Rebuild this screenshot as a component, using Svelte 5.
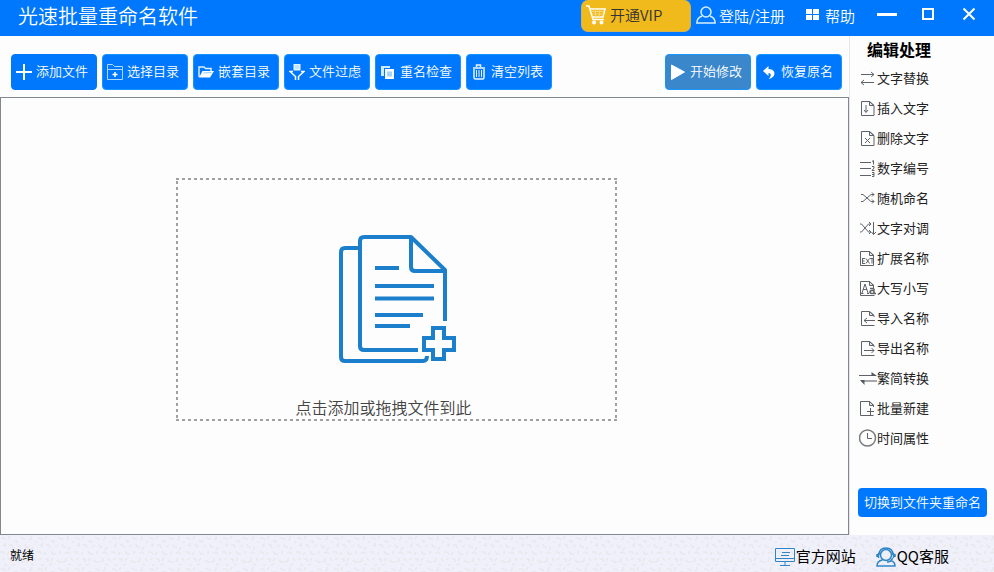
<script>
  const fileTools = [
    { icon: 'plus', label: '添加文件', plain: true },
    { icon: 'folder', label: '选择目录' },
    { icon: 'open', label: '嵌套目录' },
    { icon: 'filter', label: '文件过虑' },
    { icon: 'copy', label: '重名检查' },
    { icon: 'trash', label: '清空列表' },
  ];
  const runTools = [
    { icon: 'play', label: '开始修改', muted: true },
    { icon: 'undo', label: '恢复原名' },
  ];
  const edits = [
    { icon: 'swap', label: '文字替换' },
    { icon: 'insert', label: '插入文字' },
    { icon: 'delete', label: '删除文字' },
    { icon: 'number', label: '数字编号' },
    { icon: 'shuffle', label: '随机命名' },
    { icon: 'exchange', label: '文字对调' },
    { icon: 'ext', label: '扩展名称' },
    { icon: 'case', label: '大写小写' },
    { icon: 'import', label: '导入名称' },
    { icon: 'export', label: '导出名称' },
    { icon: 'convert', label: '繁简转换' },
    { icon: 'create', label: '批量新建' },
    { icon: 'clock', label: '时间属性' },
  ];
</script>

{#snippet toolIcon(name)}
  <svg class="tool-icon" viewBox="0 0 16 16" aria-hidden="true">
    {#if name === 'plus'}
      <path d="M8 0v16M0 8h16" fill="none" stroke="#fff" stroke-width="2" />
    {:else if name === 'folder'}
      <g fill="none" stroke="#a9dcff">
        <path d="M.5 15.500V.5h5l2 2h8v13zM.5 5.500h15" />
        <path d="M8 8v5M5.500 10.500h5" stroke="#fff" stroke-width="1.500" />
      </g>
    {:else if name === 'open'}
      <path d="M1 13V3h5l1.500 1.500H13V7" fill="none" stroke="#d8efff" stroke-width="1.500" />
      <path d="M1 13.500 4.500 7H16l-4 6.500z" fill="#fff" />
      <path d="m5.500 9 8-.5" stroke="#8cc9ff" />
    {:else if name === 'filter'}
      <path d="M4.500 0h7v6.500h-7z" fill="#e5f5ff" />
      <path d="M6 2h4M6 4h4" stroke="#9bd1ff" />
      <path d="M4 7.500H1l5.500 5V16M12 7.500h3l-5.500 5V16" fill="none" stroke="#fff" stroke-width="1.500" />
    {:else if name === 'copy'}
      <path d="M1 2h9v2H4v8H1z" fill="#cfebff" />
      <path d="M5 5h9v10H5z" fill="#fff" />
      <path d="M7 7.500h5v5H7z" fill="#a4d3fb" />
    {:else if name === 'trash'}
      <g fill="none" stroke="#e9f6ff" stroke-width="1.500">
        <path d="M5.500 3V1h4v2M2 4h12M3 5v8.500q0 1.500 1.500 1.500h7q1.500 0 1.500-1.500V5" />
        <path d="M5.500 6v7M8 6v7M10.500 6v7" stroke-width="1" />
      </g>
    {:else if name === 'play'}
      <path d="M1.500 1 14.500 8l-13 7.500z" fill="#fff" stroke="#fff" stroke-linejoin="round" />
    {:else}
      <path d="M2 7 7.500 2v3c5 0 7 3 5.500 6.500-1 2-3 3-5.500 3.500 2.500-2 3.500-5.500 0-6v3z" fill="#fff" />
    {/if}
  </svg>
{/snippet}

{#snippet editIcon(name)}
  <svg class="edit-icon" viewBox="0 0 18 18" aria-hidden="true">
    <g fill="none" stroke="#5f6369">
      {#if ['insert', 'delete', 'ext', 'case', 'import', 'export', 'create'].includes(name)}
        <path d="M10.500 2.500v4h4.500z" fill="#e4e6e9" />
      {/if}
      {#if name === 'swap'}
        <path d="M2 5.500h13M12 3l3 2.500L12 8M15 13.500H2M5 11l-3 2.500L5 16" />
      {:else if name === 'insert'}
        <path d="M2.500 16.500v-14h8l4.500 4v10zM7 6v7M5 11l2 2.500L9 11" />
      {:else if name === 'delete'}
        <path d="M2.500 16.500v-14h8l4.500 4v10zM6 9l5 5M11 9l-5 5" />
      {:else if name === 'number'}
        <path d="M1 3.500h11M1 9.500h11M1 16.500h11" />
        <path d="m13 2.500 1.500-1v4M13 7.500h2V9l-2 2.500h2.500M13 13.500h2v4h-2M13 15.500h2" />
      {:else if name === 'shuffle'}
        <path d="M2 5.500h2L12 12.500h3M2 12.500h2L12 5.500h3M13 3.500l2 2-2 2M13 10.500l2 2-2 2" />
      {:else if name === 'exchange'}
        <path d="M1 5h1.500l7 8H12M1 13h1.500l7-8H12M10 3l2 2-2 2M10 11l2 2-2 2M14.500 3v12.500M12.500 13l2 2.500 2.500-2.500" />
      {:else if name === 'ext'}
        <path d="M1.500 16.500v-14h9l4 4v10zM3 9.500h3M3 12h2.500M3 14.500h3M3.500 9.500v5M7 9.500l3.500 5M10.500 9.500 7 14.500M11 9.500h4M13 9.500v5" />
      {:else if name === 'case'}
        <path d="M1.500 16.500v-14h9l4 4V9M1.500 16.500h14" />
        <path d="m3 14 3-9 3 9M4 10.500h4M2 14.500h2.500M8 14.500h2" />
        <path d="M11 9.500h3q1 0 1 1.500v3.500h2M15 11.500h-2q-2 0-2 1.500t2 1.500 2-1" stroke-width="1.500" />
      {:else if name === 'import'}
        <path d="M2.500 16.500v-14h8l4.500 4V8M2.500 16.500h13M16 11.500H5M8 9l-3 2.500L8 14" />
      {:else if name === 'export'}
        <path d="M2.500 16.500v-14h8l4.500 4V8M2.500 16.500h13M5 11.500h10M12.500 9l2.500 2.500-2.500 2.500" />
      {:else if name === 'convert'}
        <path d="M0 6.500h17" />
        <path d="M2 12h16" stroke="#a5a8ad" stroke-width="2" />
        <path d="M12.500 3v4H18zM1 11h4.500v5z" fill="#55585e" stroke="none" />
      {:else if name === 'create'}
        <path d="M1.500 16.500v-14h9l4 4V8M1.500 16.500h13M11.500 9v7M8 12.500h7" />
      {:else}
        <circle cx="8.500" cy="9" r="8" stroke="#777b80" stroke-width="1.500" />
        <path d="M8.500 4v5.500H13" />
      {/if}
    </g>
  </svg>
{/snippet}

<div class="app">
  <header>
    <h1>光速批量重命名软件</h1>
    <button class="vip">
      <svg width="20" height="20" viewBox="0 0 20 20" aria-hidden="true">
        <g fill="none" stroke="#fff">
          <path d="M0 1h3l4 13.500h11" stroke-width="1.500" />
          <path d="M4 4h15l-2 8H6.500" stroke-width="1.500" />
          <path d="M5 6.500h13M6 9h12M9 4l1 8M14 4l-1 8" stroke="#f7d97c" />
          <circle cx="8" cy="17.500" r="1" stroke-width="2" /><circle cx="15.500" cy="17.500" r="1" stroke-width="2" />
        </g>
      </svg>
      开通VIP
    </button>
    <button class="bar-item login">
      <svg width="20" height="18" viewBox="0 0 20 18" aria-hidden="true">
        <g fill="none" stroke="#d8efff" stroke-width="1.500">
          <circle cx="10" cy="6" r="5" />
          <path d="M6 10c-3 1-5 3.500-5.200 7h18.400c-.2-3.500-2.200-6-5.200-7" />
        </g>
      </svg>
      登陆/注册
    </button>
    <button class="bar-item help">
      <svg width="13" height="12" viewBox="0 0 13 12" aria-hidden="true">
        <path d="M0 0h6v5H0zM7 0h6v5H7zM0 6h6v5H0zM7 6h6v5H7z" fill="#fff" />
      </svg>
      帮助
    </button>
    <div class="window-controls">
      <button aria-label="最小化"><svg viewBox="0 0 20 14"><path d="M0 7.500h20" stroke="#fff" stroke-width="3" /></svg></button>
      <button aria-label="最大化"><svg viewBox="0 0 20 14"><path d="M5 2h10v10H5z" fill="none" stroke="#fff" stroke-width="2" /></svg></button>
      <button aria-label="关闭"><svg viewBox="0 0 20 14"><path d="m4.500 1.500 11 11m0-11-11 11" stroke="#fff" stroke-width="2" /></svg></button>
    </div>
  </header>

  <div class="body">
    <main>
      <div class="toolbar">
        {#each fileTools as tool}
          <button class="tool" class:plain={tool.plain}>{@render toolIcon(tool.icon)}<span>{tool.label}</span></button>
        {/each}
        <span class="spacer"></span>
        {#each runTools as tool}
          <button class="tool" class:muted={tool.muted}>{@render toolIcon(tool.icon)}<span>{tool.label}</span></button>
        {/each}
      </div>
      <section class="files">
        <button class="drop">
          <svg class="frame" aria-hidden="true">
            <rect width="100%" height="100%" fill="none" stroke="#a0a0a0" stroke-width="4" stroke-dasharray="3 3" />
          </svg>
          <svg width="118" height="130" viewBox="0 0 118 130" aria-hidden="true">
            <g fill="none" stroke="#1c7fcb" stroke-width="4" stroke-linejoin="round">
              <path d="M21 14H7q-4 0-4 4v105q0 4 4 4h78q4 0 4-5" />
              <path d="M80 116H26q-4 0-4-4V7q0-4 4-4h47l34 33v51" />
              <path d="M73 3v30q0 4 4 4h30" />
              <path d="M37 34h24M37 52h59M37 64.500h59M37 81h48M37 92h35" />
              <path stroke-linejoin="miter" d="M95 94h11v10h10v12h-10v9H95v-9h-9v-12h9z" />
            </g>
          </svg>
          <span>点击添加或拖拽文件到此</span>
        </button>
      </section>
    </main>

    <aside>
      <h2>编辑处理</h2>
      <nav>
        {#each edits as edit}
          <button>{@render editIcon(edit.icon)}<span>{edit.label}</span></button>
        {/each}
      </nav>
      <button class="switch">切换到文件夹重命名</button>
    </aside>
  </div>

  <footer>
    <svg class="texture" aria-hidden="true">
      <defs>
        <pattern id="specks" width="37" height="31" patternUnits="userSpaceOnUse">
          <path d="M1 3h3l2 2M10 1l-2 3M14 6h3v2M21 2l3 2h2M31 1v3l-2 1M35 7h2M3 11l2-2v3M9 10h3l1 3M18 12l3-2M25 9l1 3h3M33 12l-2 3M0 17h3l2 2M9 17l-2 3M14 16l2 3h3M23 16v3M28 18l3-1 2 2M2 25l3-2M8 24h3v3M16 23l-2 3M20 25l2 2h3M29 23v3l-3 1M34 23l2 3M4 30h3M12 30l3-1M31 29l3 1" fill="none" stroke="#e8e8eb" stroke-width="1.500" />
        </pattern>
      </defs>
      <rect width="100%" height="100%" fill="url(#specks)" />
    </svg>
    <span class="status">就绪</span>
    <a href="#site">
      <svg width="20" height="20" viewBox="0 0 20 20" aria-hidden="true">
        <path d="M.5 1.500h19v13H.5zM0 11.500h20M10 14.500v4M5 18.500h10M7 5.500h8M6 8.500h8" fill="none" stroke="#2f86c6" />
      </svg>
      <span>官方网站</span>
    </a>
    <a href="#service">
      <svg width="20" height="20" viewBox="0 0 20 20" aria-hidden="true">
        <g fill="none" stroke="#2f86c6" stroke-width="1.500">
          <circle cx="10" cy="8" r="5.500" />
          <path d="M3 8C3 3 6 1 10 1s7 2 7 7M2.500 6v5M17.500 6v5M1 7v3M19 7v3M16.500 11q-1 4-5.500 4M6.500 13Q1 14 1 19h18q0-4-4-5.500" />
        </g>
      </svg>
      <span>QQ客服</span>
    </a>
  </footer>
</div>

<style>
  :global(body) { margin: 0; }
  .app {
    display: flex;
    flex-direction: column;
    min-height: 100vh;
    background: #fdfdfd;
    color: #222;
    font-family: "Noto Sans CJK SC", sans-serif;
  }
  button {
    margin: 0;
    padding: 0;
    border: 0;
    background: none;
    color: inherit;
    font: inherit;
    white-space: nowrap;
    cursor: pointer;
  }
  svg { display: block; flex: none; }

  header {
    display: flex;
    align-items: flex-start;
    height: 36px;
    padding: 0 15px 0 18px;
    background: #0078fe;
    color: #fff;
    font-size: 15px;
  }
  h1 {
    flex: 1;
    margin: 0;
    font-size: 20px;
    font-weight: 350;
    line-height: 32px;
  }
  .vip {
    display: flex;
    align-items: center;
    gap: 4px;
    width: 110px;
    height: 32px;
    padding: 0 4px 2px;
    border: 1px solid #d9b04f;
    border-top: 0;
    border-radius: 7px;
    background: #f0b91c;
    color: #333;
    font-weight: 350;
  }
  .bar-item {
    display: flex;
    align-items: center;
    height: 30px;
    font-weight: 350;
  }
  .login { gap: 3px; margin-left: 5px; }
  .help { gap: 6px; margin-left: 21px; }
  .window-controls {
    display: flex;
    gap: 21px;
    margin-left: 22px;
  }
  .window-controls svg { width: 20px; height: 14px; }
  .window-controls button { height: 28px; }

  .body { display: flex; flex: 1; }
  main {
    display: flex;
    flex: 1;
    flex-direction: column;
    min-width: 0;
  }
  .toolbar {
    display: flex;
    gap: 5px;
    padding: 18px 7px 7px 11px;
  }
  .spacer { flex: 1; }
  .tool {
    display: flex;
    align-items: center;
    gap: 4px;
    width: 86px;
    height: 36px;
    padding: 0 4px;
    border: 1px solid #1695ff;
    border-radius: 4px;
    background: #0078fe;
    color: #fff;
    font-size: 13px;
    font-weight: 350;
  }
  .tool span { padding-bottom: 3px; }
  .plain { border-color: #0078fe; }
  .muted { background: #3a87cc; }
  .tool-icon { width: 16px; height: 16px; }

  .files {
    flex: 1;
    padding: 80px 56px 112px 0;
    border: 1px solid #82868f;
  }
  .drop {
    position: relative;
    display: flex;
    flex-direction: column;
    align-items: center;
    width: 441px;
    max-width: 100%;
    margin: 0 auto;
    padding: 56px 0 2px;
    color: #444;
    font-size: 16px;
    font-weight: 350;
    line-height: 24px;
  }
  .drop span { margin: 31px 26px 0 0; }
  .frame {
    position: absolute;
    inset: 0;
    width: 100%;
    height: 100%;
  }

  aside {
    display: flex;
    flex-direction: column;
    width: 144px;
    border-left: 1px solid #e6e6e8;
  }
  h2 {
    margin: 0 0 0 17px;
    color: #000;
    font-size: 16px;
    line-height: 27px;
  }
  nav { display: flex; flex-direction: column; }
  nav button {
    display: flex;
    align-items: center;
    height: 30px;
    padding-left: 9px;
    font-size: 13px;
  }
  nav span { padding-bottom: 2px; }
  .switch {
    height: 29px;
    margin: 35px 7px 18px 8px;
    padding-bottom: 2px;
    border-radius: 4px;
    background: #0078fe;
    color: #fff;
    font-size: 13px;
    font-weight: 350;
  }
  .edit-icon { width: 18px; height: 18px; }

  footer {
    position: relative;
    display: flex;
    align-items: center;
    gap: 20px;
    height: 37px;
    padding: 0 45px 0 10px;
    background: #f0f0fa;
    color: #000;
    font-size: 15px;
  }
  .texture {
    position: absolute;
    inset: 0;
    width: 100%;
    height: 100%;
  }
  .status { position: relative; flex: 1; padding-top: 2px; font-size: 12px; }
  footer a {
    position: relative;
    display: flex;
    align-items: center;
    gap: 1px;
    padding-top: 6px;
    color: inherit;
    text-decoration: none;
  }
  footer a span { padding-bottom: 3px; }
</style>
